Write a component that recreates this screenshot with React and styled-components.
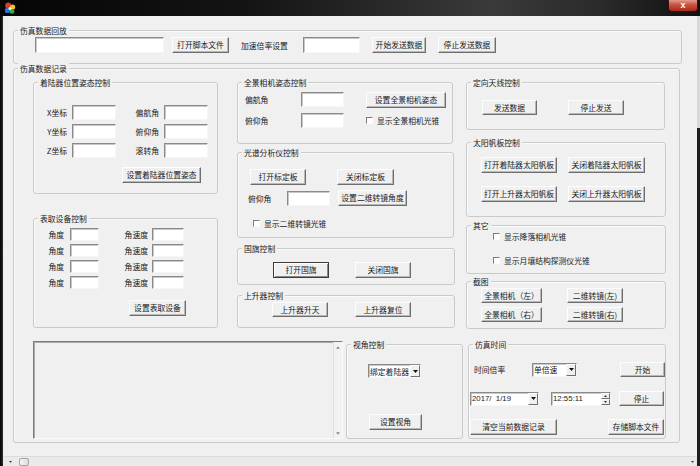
import React from 'react'
import styled, { createGlobalStyle, css } from 'styled-components'

const GlobalStyle = createGlobalStyle`
  html, body {
    margin: 0;
    padding: 0;
    background: #1b1b1b;
  }
  body {
    font-family: "Noto Sans CJK SC", "Noto Sans", sans-serif;
    font-size: 7.8px;
    color: #1a1a1a;
  }
`

const raised = css`
  border: 1px solid;
  border-color: #fdfdfd #6e6e6e #6e6e6e #fdfdfd;
  box-shadow: inset -1px -1px 0 #b8b8b8;
  background: #f0f0f0;
`
const sunken = css`
  border: 1px solid;
  border-color: #8a8a8a #f6f6f6 #f6f6f6 #8a8a8a;
  box-shadow: inset 1px 1px 0 #c8c8c8;
`

const Window = styled.div`
  width: 700px;
  height: 466px;
  display: flex;
  flex-direction: column;
  overflow: hidden;
`
const TitleBar = styled.div`
  flex: none;
  height: 16px;
  display: flex;
  align-items: flex-start;
  justify-content: space-between;
  padding-left: 4px;
  background: linear-gradient(90deg, #050505 0%, #141414 35%, #3a3a3a 70%, #2a2a2a 86%, #101010 100%);
`
const AppIcon = styled.svg`
  margin-top: 2px;
`
const CloseButton = styled.div`
  box-sizing: border-box;
  width: 30px;
  height: 12px;
  margin-right: 2px;
  display: flex;
  align-items: center;
  justify-content: center;
  border: 1px solid #3c120c;
  border-top: none;
  border-radius: 0 0 4px 4px;
  background: linear-gradient(#e29a8e, #c9513f 45%, #a8291a);
  color: #fff;
  font: bold 9px "Liberation Sans", sans-serif;
  line-height: 1;
`
const Frame = styled.div`
  flex: 1;
  display: flex;
  min-height: 0;
`
const Edge = styled.div`
  flex: none;
  width: 3px;
  background: ${p => (p.$right
    ? 'linear-gradient(#d8d8d8 0 112px, #1e1e1e 112px)'
    : 'linear-gradient(90deg, #000, #2e2e2e)')};
`
const Main = styled.div`
  flex: 1;
  display: flex;
  flex-direction: column;
  background: #f0f0f0;
`
const Client = styled.div`
  flex: 1;
  padding: 14px 0 0 10px;
`
const HScroll = styled.div`
  flex: none;
  box-sizing: border-box;
  height: 10px;
  display: flex;
  align-items: center;
  padding: 0 3px 0 6px;
  background: #eaeaea;
  border-top: 1px solid #dcdcdc;
`
const Thumb = styled.div`
  box-sizing: border-box;
  width: 10px;
  height: 8px;
  margin-left: 7px;
  border: 1px solid #a4a4a4;
  border-radius: 2px;
  background: linear-gradient(90deg, #f6f6f6, #dcdcdc);
`
const Spacer = styled.div`
  flex: 1;
`

const Group = styled.div`
  position: relative;
  box-sizing: border-box;
  flex: none;
  display: flex;
  flex-direction: column;
  align-items: flex-start;
  width: ${p => p.$w}px;
  height: ${p => p.$h}px;
  margin: ${p => p.$m || '0'};
  padding: ${p => p.$pad || '0'};
  border: 1px solid #cacaca;
  border-radius: 3px;
  box-shadow: inset 1px 1px 0 #fbfbfb;
`
const Caption = styled.span`
  position: absolute;
  top: -6px;
  left: 4px;
  padding: 0 2px;
  line-height: 11px;
  background: #f0f0f0;
  white-space: nowrap;
`
const Row = styled.div`
  display: flex;
  align-items: center;
  margin: ${p => p.$m || '0'};
`
const TopRow = styled.div`
  display: flex;
  align-items: flex-start;
  height: 247px;
`
const BottomRow = styled.div`
  display: flex;
  align-items: flex-start;
  height: 98px;
  margin-top: 12px;
`
const Column = styled.div`
  flex: none;
  display: flex;
  flex-direction: column;
  width: ${p => p.$w}px;
  margin: ${p => p.$m || '0'};
`
const FieldGrid = styled.div`
  display: grid;
  grid-template-columns: ${p => p.$cols};
  grid-auto-rows: ${p => p.$row}px;
  row-gap: ${p => p.$gap}px;
  align-items: center;
`

const Button = styled.button`
  appearance: none;
  box-sizing: border-box;
  flex: none;
  width: ${p => p.$w}px;
  height: ${p => p.$h || 16}px;
  margin: ${p => p.$m || '0'};
  padding: 0;
  display: flex;
  align-items: center;
  justify-content: center;
  font: inherit;
  color: inherit;
  line-height: 1;
  white-space: nowrap;
  ${raised}
  ${p => p.$default && css`
    border-color: #3c3c3c;
    box-shadow: inset 1px 1px 0 #fff, inset -1px -1px 0 #8a8a8a;
  `}
`
const Field = styled.div`
  box-sizing: border-box;
  flex: none;
  width: ${p => p.$w}px;
  height: ${p => p.$h || 15}px;
  margin: ${p => p.$m || '0'};
  background: #fff;
  ${sunken}
`
const Label = styled.span`
  flex: none;
  white-space: nowrap;
  width: ${p => (p.$w ? `${p.$w}px` : 'auto')};
  margin: ${p => p.$m || '0'};
  padding-right: ${p => p.$pr || 0}px;
  text-align: ${p => (p.$right ? 'right' : 'left')};
  line-height: 11px;
`
const CheckRow = styled.label`
  display: flex;
  align-items: center;
  height: 12px;
  margin: ${p => p.$m || '0'};
  white-space: nowrap;
`
const CheckBox = styled.span`
  box-sizing: border-box;
  flex: none;
  width: 7px;
  height: 7px;
  margin-right: 4px;
  background: #fff;
  border: 1px solid;
  border-color: #7a7a7a #fafafa #fafafa #7a7a7a;
`

const LogBox = styled.div`
  box-sizing: border-box;
  flex: none;
  width: 310px;
  height: 98px;
  display: flex;
  justify-content: flex-end;
  background: #f0f0f0;
  border: 1px solid;
  border-color: #7c7c7c #fbfbfb #fbfbfb #7c7c7c;
  box-shadow: inset 1px 1px 0 #ababab;
`
const VScroll = styled.div`
  width: 8px;
  display: flex;
  flex-direction: column;
  justify-content: space-between;
  align-items: center;
  padding: 4px 0 3px;
  border-left: 1px solid #e0e0e0;
  background: #f2f2f2;
`

const Combo = styled.div`
  box-sizing: border-box;
  flex: none;
  display: flex;
  align-items: stretch;
  width: ${p => p.$w}px;
  height: ${p => p.$h || 14}px;
  margin: ${p => p.$m || '0'};
  background: #fff;
  ${sunken}
`
const ComboValue = styled.span`
  flex: 1;
  display: flex;
  align-items: center;
  padding-left: 1px;
  white-space: pre;
  overflow: hidden;
  font-family: ${p => (p.$mono ? '"Liberation Sans", sans-serif' : 'inherit')};
`
const DropButton = styled.span`
  flex: none;
  box-sizing: border-box;
  width: 10px;
  display: flex;
  align-items: center;
  justify-content: center;
  ${raised}
  box-shadow: none;
`
const SpinBox = styled.span`
  flex: none;
  width: 9px;
  display: flex;
  flex-direction: column;
`
const SpinPart = styled.span`
  flex: 1;
  box-sizing: border-box;
  display: flex;
  align-items: center;
  justify-content: center;
  ${raised}
  box-shadow: none;
`

const Tri = ({ up, color = '#111', w = 5, h = 3 }) => (
  <svg width={w} height={h} viewBox="0 0 5 3">
    <path d={up ? 'M0 3h5L2.5 0z' : 'M0 0h5L2.5 3z'} fill={color} />
  </svg>
)

const ComboBox = ({ value, w, m, mono }) => (
  <Combo $w={w} $m={m}>
    <ComboValue $mono={mono}>{value}</ComboValue>
    <DropButton><Tri /></DropButton>
  </Combo>
)

const landerRows = [['X坐标', '偏航角'], ['Y坐标', '俯仰角'], ['Z坐标', '滚转角']]

const App = () => (
  <Window>
    <GlobalStyle />
    <TitleBar>
      <AppIcon width="12" height="12" viewBox="0 0 12 12">
        <circle cx="4.2" cy="3.6" r="3" fill="#e0392b" />
        <circle cx="8.6" cy="5" r="2.6" fill="#f1c22e" />
        <circle cx="3.4" cy="8.4" r="2.6" fill="#2e6ed6" />
        <circle cx="8" cy="9.4" r="2.4" fill="#3aa846" />
        <circle cx="6" cy="6.4" r="1.5" fill="#f4f4f4" />
      </AppIcon>
      <CloseButton>x</CloseButton>
    </TitleBar>
    <Frame>
      <Edge />
      <Main>
        <Client>
          <Group $w={669} $h={34} $pad="6px 0 0 21px">
            <Caption>伤真数据回放</Caption>
            <Row>
              <Field $w={129} $h={16} />
              <Button $w={57} $m="0 0 0 8px">打开脚本文件</Button>
              <Label $w={49} $m="0 0 0 12px">加速倍率设置</Label>
              <Field $w={57} $h={16} $m="0 0 0 13px" />
              <Button $w={54} $m="0 0 0 12px">开始发送数据</Button>
              <Button $w={58} $m="0 0 0 12px">停止发送数据</Button>
            </Row>
          </Group>

          <Group $w={667} $h={375} $m="4px 0 0 0" $pad="13px 0 0 19px">
            <Caption>伤真数据记录</Caption>
            <TopRow>
              <Column $w={185}>
                <Group $w={185} $h={112} $pad="22px 0 0 0">
                  <Caption>着陆器位置姿态控制</Caption>
                  <FieldGrid $cols="38px 44px 48px 44px" $row={15} $gap={4}>
                    {landerRows.map(([a, b]) => (
                      <React.Fragment key={a}>
                        <Label $right $pr={5}>{a}</Label>
                        <Field $w={44} />
                        <Label $right $pr={5}>{b}</Label>
                        <Field $w={44} />
                      </React.Fragment>
                    ))}
                  </FieldGrid>
                  <Button $w={79} $m="9px 0 0 88px">设置着陆器位置姿态</Button>
                </Group>
                <Group $w={185} $h={110} $m="24px 0 0 0" $pad="9px 0 0 0">
                  <Caption>表取设备控制</Caption>
                  <FieldGrid $cols="36px 29px 53px 32px" $row={13} $gap={3}>
                    {[0, 1, 2, 3].map(i => (
                      <React.Fragment key={i}>
                        <Label $right $pr={6}>角度</Label>
                        <Field $w={29} $h={13} />
                        <Label $right $pr={4}>角速度</Label>
                        <Field $w={32} $h={13} />
                      </React.Fragment>
                    ))}
                  </FieldGrid>
                  <Button $w={57} $m="11px 0 0 95px">设置表取设备</Button>
                </Group>
              </Column>

              <Column $w={218} $m="0 0 0 19px">
                <Group $w={216} $h={62} $pad="9px 0 0 7px">
                  <Caption>全景相机姿态控制</Caption>
                  <FieldGrid $cols="56px 65px 80px" $row={15} $gap={6}>
                    <Label>偏航角</Label>
                    <Field $w={43} />
                    <Button $w={80}>设置全景相机姿态</Button>
                    <Label>俯仰角</Label>
                    <Field $w={43} />
                    <CheckRow><CheckBox />显示全景相机光锥</CheckRow>
                  </FieldGrid>
                </Group>
                <Group $w={217} $h={86} $m="8px 0 0 0" $pad="16px 0 0 0">
                  <Caption>光谱分析仪控制</Caption>
                  <Row $m="0 0 0 12px">
                    <Button $w={56}>打开标定板</Button>
                    <Button $w={57} $m="0 0 0 31px">关闭标定板</Button>
                  </Row>
                  <Row $m="5px 0 0 10px">
                    <Label $w={39}>俯仰角</Label>
                    <Field $w={43} />
                    <Button $w={69} $m="0 0 0 8px">设置二维转镜角度</Button>
                  </Row>
                  <CheckRow $m="11px 0 0 15px"><CheckBox />显示二维转镜光锥</CheckRow>
                </Group>
                <Group $w={218} $h={37} $m="10px 0 0 0" $pad="13px 0 0 35px">
                  <Caption>国旗控制</Caption>
                  <Row>
                    <Button $w={56} $default>打开国旗</Button>
                    <Button $w={56} $m="0 0 0 26px">关闭国旗</Button>
                  </Row>
                </Group>
                <Group $w={218} $h={33} $m="10px 0 0 0" $pad="6px 0 0 34px">
                  <Caption>上升器控制</Caption>
                  <Row>
                    <Button $w={56} $h={15}>上升器升天</Button>
                    <Button $w={56} $h={15} $m="0 0 0 27px">上升器复位</Button>
                  </Row>
                </Group>
              </Column>

              <Column $w={200} $m="0 0 0 11px">
                <Group $w={199} $h={48} $pad="17px 0 0 15px">
                  <Caption>定向天线控制</Caption>
                  <Row>
                    <Button $w={55} $h={15}>发送数据</Button>
                    <Button $w={56} $h={15} $m="0 0 0 31px">停止发送</Button>
                  </Row>
                </Group>
                <Group $w={200} $h={75} $m="12px 0 0 0" $pad="14px 0 0 14px">
                  <Caption>太阳帆板控制</Caption>
                  <Row>
                    <Button $w={76}>打开着陆器太阳帆板</Button>
                    <Button $w={77} $m="0 0 0 11px">关闭着陆器太阳帆板</Button>
                  </Row>
                  <Row $m="13px 0 0 0">
                    <Button $w={76}>打开上升器太阳帆板</Button>
                    <Button $w={77} $m="0 0 0 11px">关闭上升器太阳帆板</Button>
                  </Row>
                </Group>
                <Group $w={200} $h={49} $m="8px 0 0 0" $pad="4px 0 0 26px">
                  <Caption>其它</Caption>
                  <CheckRow><CheckBox />显示降落相机光锥</CheckRow>
                  <CheckRow $m="12px 0 0 0"><CheckBox />显示月壤结构探测仪光锥</CheckRow>
                </Group>
                <Group $w={200} $h={48} $m="7px 0 0 0" $pad="6px 0 0 14px">
                  <Caption>截图</Caption>
                  <Row>
                    <Button $w={61} $h={15}>全景相机（左）</Button>
                    <Button $w={56} $h={15} $m="0 0 0 25px">二维转镜(左)</Button>
                  </Row>
                  <Row $m="4px 0 0 0">
                    <Button $w={61} $h={15}>全景相机（右）</Button>
                    <Button $w={56} $h={15} $m="0 0 0 25px">二维转镜(右)</Button>
                  </Row>
                </Group>
              </Column>
            </TopRow>

            <BottomRow>
              <LogBox>
                <VScroll>
                  <Tri up color="#8a8a8a" w={4} h={3} />
                  <Tri color="#8a8a8a" w={4} h={3} />
                </VScroll>
              </LogBox>
              <Group $w={117} $h={95} $m="3px 0 0 3px" $pad="19px 0 0 21px">
                <Caption>视角控制</Caption>
                <ComboBox value="绑定着陆器" w={53} />
                <Button $w={53} $m="36px 0 0 1px">设置视角</Button>
              </Group>
              <Group $w={198} $h={95} $m="3px 0 0 5px" $pad="17px 0 0 1px">
                <Caption>仿真时间</Caption>
                <Row>
                  <Label $w={58} $m="0 0 0 4px">时间倍率</Label>
                  <ComboBox value="单倍速" w={45} />
                  <Button $w={45} $h={15} $m="0 0 0 43px">开始</Button>
                </Row>
                <Row $m="14px 0 0 0">
                  <ComboBox value="2017/  1/19" w={69} mono />
                  <Combo $w={60} $m="0 0 0 12px">
                    <ComboValue $mono>12:55:11</ComboValue>
                    <SpinBox>
                      <SpinPart><Tri up color="#333" w={3} h={2} /></SpinPart>
                      <SpinPart><Tri color="#333" w={3} h={2} /></SpinPart>
                    </SpinBox>
                  </Combo>
                  <Button $w={45} $h={15} $m="0 0 0 8px">停止</Button>
                </Row>
                <Row $m="13px 0 0 0">
                  <Button $w={87}>清空当前数据记录</Button>
                  <Button $w={56} $m="0 0 0 51px">存储脚本文件</Button>
                </Row>
              </Group>
            </BottomRow>
          </Group>
        </Client>
        <HScroll>
          <Tri color="#444" w={3} h={4} />
          <Thumb />
          <Spacer />
          <Tri color="#444" w={3} h={4} />
        </HScroll>
      </Main>
      <Edge $right />
    </Frame>
  </Window>
)

export default App
